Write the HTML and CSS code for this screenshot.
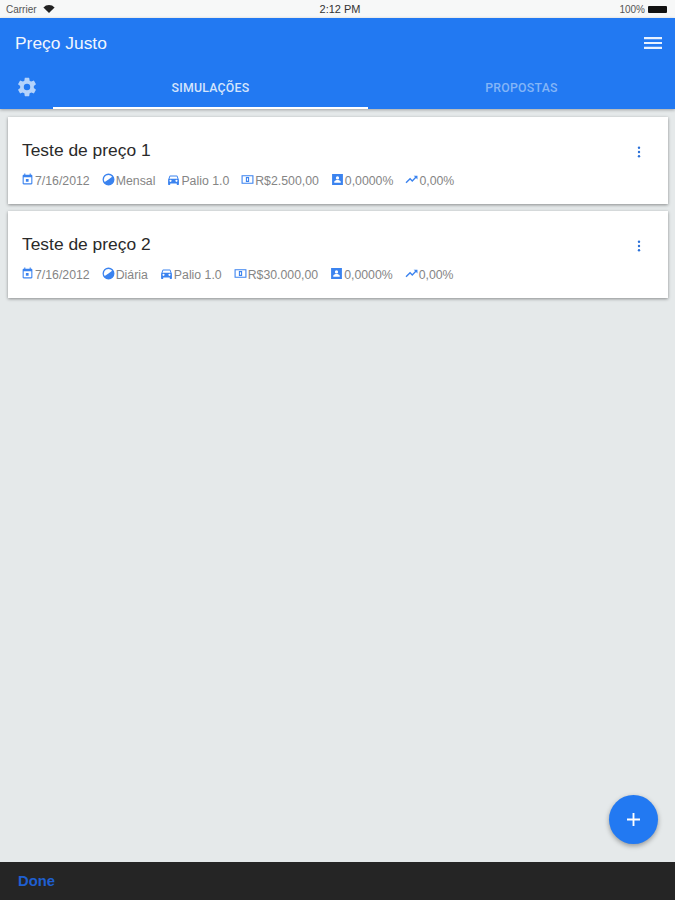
FILE: index.html
```html
<!DOCTYPE html>
<html lang="en">
<head>
    <meta charset="UTF-8">
    <meta name="viewport" content="width=device-width, initial-scale=1.0">
    <title>Preço Justo</title>
    <link rel="stylesheet" href="styles.css">
</head>
<body>
    <svg class="icon-defs" width="0" height="0">
        <symbol id="i-date" viewBox="0 0 24 24"><path d="M19 3h-1V1h-2v2H8V1H6v2H5c-1.100 0-2 .9-2 2v14c0 1.100.9 2 2 2h14c1.100 0 2-.9 2-2V5c0-1.100-.9-2-2-2zm0 16H5V8h14v11zM9 11h5v5H9z"/></symbol>
        <symbol id="i-period" viewBox="0 0 24 24"><path d="M12 1a11 11 0 1 0 0 22 11 11 0 0 0 0-22zm0 2.500a8.500 8.500 0 0 1 6.700 3.300L12 12l-7 4.800A8.500 8.500 0 0 1 12 3.500z" fill-rule="evenodd"/></symbol>
        <symbol id="i-car" viewBox="0 0 24 24"><path d="M19.500 5.500C19.300 4.900 18.700 4.500 18 4.500H6c-.7 0-1.300.4-1.500 1L2 12.500V21c0 .5.5 1 1 1h2c.5 0 1-.5 1-1v-1.500h12V21c0 .5.5 1 1 1h2c.5 0 1-.5 1-1v-8.500zM6.500 16.500a2 2 0 1 1 0-4 2 2 0 0 1 0 4zm11 0a2 2 0 1 1 0-4 2 2 0 0 1 0 4zM4.500 10.500L6 6.500h12l1.500 4z"/></symbol>
        <symbol id="i-money" viewBox="0 0 24 24"><path d="M1 4h22v16H1V4zm2 2v12h18V6H3zm6 1.500h6v9H9v-9zm2 2v5h2v-5h-2z" fill-rule="evenodd"/></symbol>
        <symbol id="i-rate" viewBox="0 0 24 24"><path d="M2 2h20v20H2V2zm10 4a3 3 0 1 0 0 6 3 3 0 0 0 0-6zm-6 12h12v-1.800c0-2-4-3.200-6-3.200s-6 1.200-6 3.200V18z" fill-rule="evenodd"/></symbol>
        <symbol id="i-trend" viewBox="0 0 24 24"><path d="M16 5l2.600 2.600-5.200 5.200-4-4L1 17.200 2.800 19l6.600-6.600 4 4 7-7L23 12V5z"/></symbol>
    </svg>

    <div class="status-bar">
        <div class="status-left">
            <span>Carrier</span>
            <svg class="wifi" viewBox="0 0 14 10"><path d="M7 10L0 3a10 10 0 0 1 14 0z"/></svg>
        </div>
        <div class="status-time">2:12 PM</div>
        <div class="status-right">
            <span>100%</span>
            <span class="battery"></span>
        </div>
    </div>

    <header class="app-bar">
        <div class="title-row">
            <h1 class="app-title">Preço Justo</h1>
            <svg class="menu-icon" viewBox="0 0 18 14"><path d="M0 1h18v2.200H0zM0 5.900h18v2.200H0zM0 10.800h18V13H0z"/></svg>
        </div>
        <nav class="tabs">
            <div class="tab-gear">
                <svg viewBox="0 0 24 24"><path d="M19.430 12.980c.04-.32.070-.64.070-.98s-.03-.66-.07-.98l2.110-1.650c.19-.15.240-.42.120-.64l-2-3.460c-.12-.22-.39-.3-.61-.22l-2.490 1c-.52-.4-1.080-.73-1.690-.98l-.38-2.650A.49.49 0 0 0 14 2h-4c-.25 0-.46.180-.49.420l-.38 2.650c-.61.25-1.170.59-1.690.98l-2.490-1c-.23-.09-.49 0-.61.220l-2 3.460c-.13.220-.07.490.12.640l2.110 1.650c-.04.32-.07.65-.07.980s.03.660.07.980l-2.110 1.650c-.19.150-.24.420-.12.640l2 3.460c.12.220.39.300.61.220l2.490-1c.52.400 1.080.730 1.690.980l.38 2.650c.03.240.24.420.49.420h4c.25 0 .46-.18.49-.42l.38-2.650c.61-.25 1.170-.59 1.690-.98l2.490 1c.23.090.49 0 .61-.22l2-3.460c.12-.22.070-.49-.12-.64l-2.110-1.650zM12 15.500a3.500 3.500 0 1 1 0-7 3.500 3.500 0 0 1 0 7z"/></svg>
            </div>
            <div class="tab active">SIMULAÇÕES</div>
            <div class="tab">PROPOSTAS</div>
        </nav>
    </header>

    <main class="content">
        <article class="card">
            <div class="card-body">
                <h2 class="card-title">Teste de preço 1</h2>
                <ul class="meta">
                    <li><svg><use href="#i-date"/></svg>7/16/2012</li>
                    <li><svg><use href="#i-period"/></svg>Mensal</li>
                    <li><svg><use href="#i-car"/></svg>Palio 1.0</li>
                    <li><svg><use href="#i-money"/></svg>R$2.500,00</li>
                    <li><svg><use href="#i-rate"/></svg>0,0000%</li>
                    <li><svg><use href="#i-trend"/></svg>0,00%</li>
                </ul>
            </div>
            <svg class="more" viewBox="0 0 4 14"><circle cx="2" cy="2" r="1.400"/><circle cx="2" cy="7" r="1.400"/><circle cx="2" cy="12" r="1.400"/></svg>
        </article>

        <article class="card">
            <div class="card-body">
                <h2 class="card-title">Teste de preço 2</h2>
                <ul class="meta">
                    <li><svg><use href="#i-date"/></svg>7/16/2012</li>
                    <li><svg><use href="#i-period"/></svg>Diária</li>
                    <li><svg><use href="#i-car"/></svg>Palio 1.0</li>
                    <li><svg><use href="#i-money"/></svg>R$30.000,00</li>
                    <li><svg><use href="#i-rate"/></svg>0,0000%</li>
                    <li><svg><use href="#i-trend"/></svg>0,00%</li>
                </ul>
            </div>
            <svg class="more" viewBox="0 0 4 14"><circle cx="2" cy="2" r="1.400"/><circle cx="2" cy="7" r="1.400"/><circle cx="2" cy="12" r="1.400"/></svg>
        </article>

        <button class="fab">
            <svg viewBox="0 0 14 14"><path d="M6 0h2v6h6v2H8v6H6V8H0V6h6z"/></svg>
        </button>
    </main>

    <footer class="done-bar">
        <span class="done">Done</span>
    </footer>
</body>
</html>
```

FILE: styles.css
```css
* {
    box-sizing: border-box;
}
body {
    margin: 0;
    height: 900px;
    display: flex;
    flex-direction: column;
    overflow: hidden;
    background-color: #e5e9ea;
    font-family: "Liberation Sans", Arial, sans-serif;
}
.icon-defs {
    display: none;
}

/* status bar */
.status-bar {
    height: 18px;
    padding: 0 6px;
    display: grid;
    grid-template-columns: 1fr auto 1fr;
    align-items: center;
    background-color: #f7f8f8;
    color: #333;
    font-size: 10px;
}
.status-left {
    display: flex;
    align-items: center;
    gap: 6px;
    color: #555;
}
.wifi {
    width: 12px;
    height: 8px;
    fill: #222;
}
.status-time {
    font-size: 11px;
    padding-left: 5px;
}
.status-right {
    display: flex;
    justify-content: flex-end;
    align-items: center;
    gap: 3px;
    color: #555;
}
.battery {
    width: 19px;
    height: 7px;
    background-color: #111;
    border-radius: 1px;
    margin-right: 2px;
}

/* app bar */
.app-bar {
    height: 91px;
    background-color: #2279f2;
    color: #fff;
    box-shadow: 0 1px 3px rgba(0, 0, 0, 0.3);
    position: relative;
}
.title-row {
    height: 50px;
    padding: 0 13px 0 15px;
    display: flex;
    justify-content: space-between;
    align-items: center;
}
.app-title {
    margin: 0;
    font-size: 17.400px;
    font-weight: 400;
    color: #f1f6fe;
}
.menu-icon {
    width: 18px;
    height: 14px;
    fill: #e8f1fe;
}
.tabs {
    height: 41px;
    display: grid;
    grid-template-columns: 53px 315px 1fr;
    font-family: Roboto, "Liberation Sans", sans-serif;
    font-size: 12.300px;
    font-weight: 500;
    letter-spacing: 0.25px;
}
.tab-gear {
    display: flex;
    justify-content: center;
    padding-top: 8px;
}
.tab-gear svg {
    width: 22px;
    height: 22px;
    fill: #b4d3fb;
}
.tab {
    display: flex;
    justify-content: center;
    align-items: center;
    padding-bottom: 1px;
    color: #84b5f7;
}
.tab.active {
    color: #d5e5fc;
    border-bottom: 2px solid #fff;
    padding-bottom: 0;
}

/* cards */
.content {
    flex: 1;
    padding: 8px 7px 0 8px;
    display: flex;
    flex-direction: column;
    gap: 7px;
    position: relative;
}
.card {
    height: 87px;
    padding: 0 27px 0 14px;
    display: flex;
    justify-content: space-between;
    background-color: #fff;
    box-shadow: 0 1px 3px rgba(0, 0, 0, 0.4);
}
.card-title {
    margin: 23px 0 0;
    font-size: 17.400px;
    font-weight: 400;
    line-height: 20px;
    color: #2a2a2a;
}
.meta {
    list-style: none;
    margin: 13px 0 0 -1px;
    padding: 0;
    display: flex;
    gap: 12px;
    font-size: 12.300px;
    line-height: 16px;
    color: #858585;
}
.meta li {
    display: flex;
    align-items: center;
    gap: 1px;
}
.meta svg {
    width: 13px;
    height: 13px;
    fill: #3b83ef;
    margin-top: -3px;
}
.more {
    width: 4px;
    height: 12px;
    margin-top: 29px;
    fill: #2a70d8;
}

/* add button */
.fab {
    position: absolute;
    right: 17px;
    bottom: 18px;
    width: 49px;
    height: 49px;
    padding: 0;
    border: none;
    border-radius: 50%;
    display: flex;
    justify-content: center;
    align-items: center;
    background-color: #2279f2;
    box-shadow: 0 2px 5px rgba(0, 0, 0, 0.35);
}
.fab svg {
    width: 13px;
    height: 13px;
    fill: #fff;
}

/* bottom bar */
.done-bar {
    height: 38px;
    padding: 0 18px;
    display: flex;
    align-items: center;
    background-color: #252525;
}
.done {
    color: #1f5fd0;
    font-size: 14.800px;
    font-weight: 700;
}
```
